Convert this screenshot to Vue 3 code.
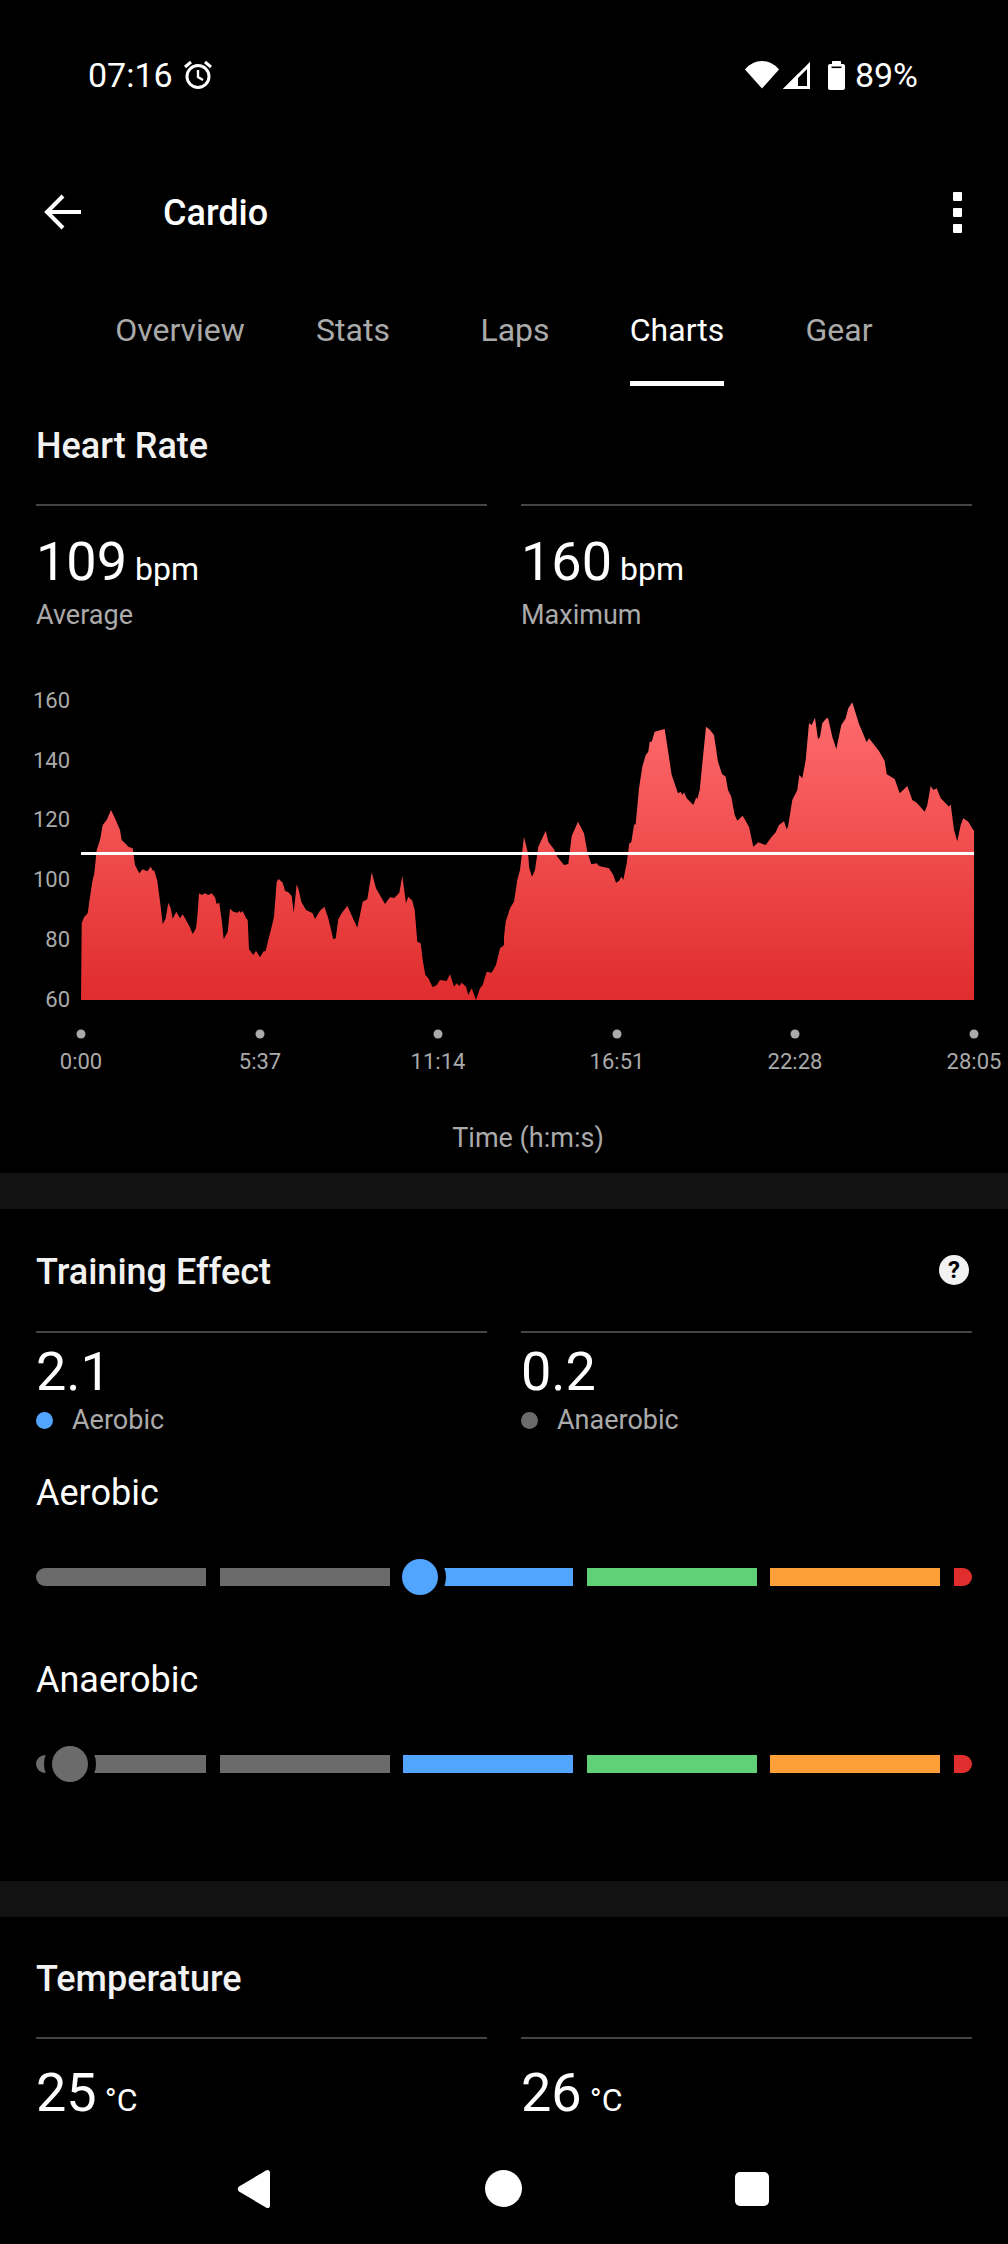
<script setup>
import { computed } from 'vue';

const tabs = ['Overview', 'Stats', 'Laps', 'Charts', 'Gear'];

// curve traced from the chart, in 3x crop coordinates
const leftCurve = [[245,730],[252,712],[263,700],[270,650],[277,605],[283,580],[290,510],[300,480],[308,435],[320,420],[333,390],[345,415],[360,450],[365,480],[378,492],[385,500],[398,505],[405,555],[418,580],[428,568],[442,574],[452,560],[458,572],[462,570],[472,602],[482,680],[488,733],[497,715],[505,668],[512,685],[518,716],[529,695],[540,715],[548,703],[558,720],[568,738],[578,762],[588,745],[592,710],[597,640],[605,645],[615,640],[625,645],[635,640],[645,652],[650,672],[658,668],[665,720],[671,778],[683,755],[690,686],[700,695],[712,698],[718,693],[722,698],[728,693],[738,714],[743,720],[747,808],[760,825],[768,812],[780,832],[790,815],[797,812],[805,780],[815,740],[822,710],[830,605],[836,597],[848,608],[855,632],[865,637],[875,648],[881,698],[890,613],[896,630],[904,665],[918,690],[938,700],[945,717],[960,692],[973,680],[985,715],[1000,778],[1007,775],[1015,718],[1025,700],[1042,677],[1050,695],[1072,743],[1088,665],[1102,658],[1115,577],[1128,625],[1155,672],[1170,652],[1183,654],[1198,638],[1207,588],[1218,670],[1225,650],[1237,662],[1244,690],[1252,785],[1262,790],[1268,840],[1276,885],[1285,895],[1298,922],[1310,915],[1320,900],[1340,903],[1350,882],[1362,920],[1370,910],[1378,918],[1385,908],[1398,920],[1405,945],[1415,925],[1428,960],[1440,925],[1448,915],[1460,875],[1475,878],[1488,855],[1500,805],[1512,795]];
const rightCurve = [[0,770],[5,725],[18,685],[30,665],[40,600],[48,570],[60,470],[72,520],[76,565],[84,590],[93,570],[103,500],[115,475],[125,452],[133,485],[140,495],[150,508],[160,530],[180,555],[193,552],[203,468],[222,425],[240,460],[250,515],[262,553],[278,550],[285,558],[315,565],[328,585],[336,608],[345,603],[352,590],[358,600],[368,550],[376,490],[382,487],[390,435],[395,432],[405,325],[415,260],[425,225],[433,215],[437,185],[443,185],[452,155],[482,147],[503,285],[522,340],[530,335],[535,345],[540,337],[548,355],[568,375],[577,352],[580,358],[587,330],[606,140],[612,145],[618,150],[630,165],[642,245],[654,282],[665,290],[672,330],[682,350],[692,405],[700,422],[716,407],[735,440],[748,500],[763,487],[785,495],[803,470],[815,457],[825,435],[840,424],[848,448],[852,440],[865,360],[880,330],[886,285],[895,295],[905,240],[915,130],[923,135],[933,113],[942,178],[948,170],[955,130],[965,117],[972,113],[985,170],[997,207],[1012,135],[1025,115],[1033,85],[1045,67],[1065,132],[1088,187],[1095,175],[1125,213],[1142,243],[1148,283],[1157,288],[1172,297],[1187,340],[1210,318],[1225,360],[1238,368],[1262,395],[1270,375],[1280,318],[1288,330],[1298,325],[1310,355],[1335,380],[1340,373],[1350,450],[1360,484],[1370,435],[1378,415],[1393,425],[1408,450],[1410,450]];

const chartPoints = computed(() => {
	const toPage = (x, y, offset) => `${(offset + x / 3).toFixed(1)},${(680 + y / 3).toFixed(1)}`;
	const left = leftCurve.map(([x, y]) => toPage(x, y, 0));
	const right = rightCurve.map(([x, y]) => toPage(x, y, 504));
	return ['81,1000', ...left, ...right, '974,1000'].join(' ');
});

const yLabels = [
	{ text: '160', y: 700 },
	{ text: '140', y: 760 },
	{ text: '120', y: 819 },
	{ text: '100', y: 879 },
	{ text: '80', y: 939 },
	{ text: '60', y: 999 },
];
const xLabels = [
	{ text: '0:00', x: 81 },
	{ text: '5:37', x: 260 },
	{ text: '11:14', x: 438 },
	{ text: '16:51', x: 617 },
	{ text: '22:28', x: 795 },
	{ text: '28:05', x: 974 },
];

const segments = [
	{ color: '#6b6b6b', width: 170 },
	{ color: '#6b6b6b', width: 170 },
	{ color: '#51a5ff', width: 170 },
	{ color: '#60d176', width: 170 },
	{ color: '#ff9f38', width: 170 },
	{ color: '#e02d2d', width: 18 },
];
const sliders = [
	{ name: 'Aerobic', knob: 384, color: '#51a5ff' },
	{ name: 'Anaerobic', knob: 34, color: '#6b6b6b' },
];
</script>

<template>
	<div class="screen">
		<div class="status">
			<div class="status__left">
				<span class="status__time">07:16</span>
				<svg class="status__alarm" width="30" height="30" viewBox="0 0 30 30" fill="none" stroke="#fff" stroke-width="3">
					<circle cx="15" cy="16.500" r="11" />
					<path d="M15 10v7l5 3" stroke-width="2.400" />
					<path d="M2 7 8 2M28 7 22 2" />
				</svg>
			</div>
			<div class="status__right">
				<svg width="34" height="28" viewBox="0 0 34 28" fill="#fff">
					<path d="M17 27.500 0 8.500C4.500 3 10.500 0 17 0s12.500 3 17 8.500Z" />
				</svg>
				<svg class="status__signal" width="27" height="27" viewBox="0 0 27 27">
					<path d="M25.500 3.500V25.500H3.500Z" fill="none" stroke="#fff" stroke-width="3" />
					<path d="M15 12V27H0Z" fill="#fff" />
				</svg>
				<svg class="status__battery" width="17" height="29" viewBox="0 0 17 29">
					<path d="M4 3V1c0-.6.400-1 1-1h7c.6 0 1 .4 1 1v2h2c1.100 0 2 .9 2 2v22c0 1.100-.9 2-2 2H2c-1.100 0-2-.9-2-2V5c0-1.100.9-2 2-2Z" fill="#fff" />
					<rect x="3.500" y="5.500" width="10" height="1.600" fill="#000" />
				</svg>
				<span class="status__pct">89%</span>
			</div>
		</div>

		<div class="toolbar">
			<svg class="toolbar__back" width="38" height="36" viewBox="0 0 38 36" fill="none" stroke="#fff" stroke-width="4">
				<path d="M37 18H4M19 2 3 18l16 16" />
			</svg>
			<span class="toolbar__title">Cardio</span>
			<div class="toolbar__menu">
				<i></i><i></i><i></i>
			</div>
		</div>

		<div class="tabs">
			<div
				v-for="tab in tabs"
				:key="tab"
				class="tabs__item"
				:class="{ 'tabs__item--active': tab === 'Charts' }"
			>
				<span class="tabs__label">{{ tab }}</span>
			</div>
		</div>

		<section class="section section--heart">
			<h2 class="section__title">Heart Rate</h2>
			<div class="stats">
				<div class="stat">
					<div class="stat__value">109<small>bpm</small></div>
					<div class="stat__label">Average</div>
				</div>
				<div class="stat">
					<div class="stat__value">160<small>bpm</small></div>
					<div class="stat__label">Maximum</div>
				</div>
			</div>
		</section>

		<svg class="chart" width="1008" height="533" viewBox="0 640 1008 533">
			<defs>
				<linearGradient id="hrFill" x1="0" y1="0" x2="0" y2="1">
					<stop offset="0" stop-color="#ff6c6e" />
					<stop offset="1" stop-color="#e02c2c" />
				</linearGradient>
			</defs>
			<polygon :points="chartPoints" fill="url(#hrFill)" />
			<rect x="81" y="852" width="893" height="3" fill="#fff" />
			<text
				v-for="label in yLabels"
				:key="label.text"
				class="chart__text"
				x="70"
				:y="label.y + 8"
				text-anchor="end"
			>{{ label.text }}</text>
			<template v-for="label in xLabels" :key="label.text">
				<circle :cx="label.x" cy="1034" r="4.500" fill="#aaa" />
				<text class="chart__text" :x="label.x" y="1069" text-anchor="middle">{{ label.text }}</text>
			</template>
			<text class="chart__axis" x="528" y="1147" text-anchor="middle">Time (h:m:s)</text>
		</svg>

		<div class="band"></div>

		<section class="section section--training">
			<div class="section__head">
				<h2 class="section__title">Training Effect</h2>
				<div class="help">?</div>
			</div>
			<div class="stats stats--training">
				<div class="stat">
					<div class="stat__value">2.1</div>
					<div class="stat__legend"><i class="dot dot--blue"></i>Aerobic</div>
				</div>
				<div class="stat">
					<div class="stat__value">0.2</div>
					<div class="stat__legend"><i class="dot dot--gray"></i>Anaerobic</div>
				</div>
			</div>
			<div v-for="slider in sliders" :key="slider.name" class="effect">
				<div class="effect__name">{{ slider.name }}</div>
				<div class="effect__bar">
					<div
						v-for="(seg, i) in segments"
						:key="i"
						class="effect__seg"
						:style="{ background: seg.color, width: seg.width + 'px' }"
					></div>
					<div class="effect__knob" :style="{ left: slider.knob - 18 + 'px', background: slider.color }"></div>
				</div>
			</div>
		</section>

		<div class="band"></div>

		<section class="section section--temp">
			<h2 class="section__title">Temperature</h2>
			<div class="stats stats--temp">
				<div class="stat">
					<div class="stat__value">25<small>°C</small></div>
				</div>
				<div class="stat">
					<div class="stat__value">26<small>°C</small></div>
				</div>
			</div>
		</section>

		<div class="nav">
			<svg width="34" height="40" viewBox="0 0 34 40" fill="#fff">
				<path d="M29 1.500c1.800-1.300 4-.3 4 2v33c0 2.300-2.200 3.300-4 2L2 22.500c-1.600-1.200-1.600-3.800 0-5Z" />
			</svg>
			<div class="nav__home"></div>
			<div class="nav__recent"></div>
		</div>
	</div>
</template>

<style>
html,
body {
	background: #000;
}
</style>

<style scoped>
.screen {
	position: relative;
	width: 1008px;
	height: 2244px;
	overflow: hidden;
	background: #000;
	color: #fff;
	font-family: Roboto, sans-serif;
}

.status {
	height: 150px;
	padding: 58px 90px 0 88px;
	box-sizing: border-box;
	display: flex;
	justify-content: space-between;
	align-items: flex-start;
}

.status__left,
.status__right {
	display: flex;
	align-items: center;
	height: 34px;
}

.status__time,
.status__pct {
	font-size: 34px;
	line-height: 34px;
}

.status__alarm {
	margin-left: 10px;
}

.status__signal {
	margin-left: 4px;
}

.status__battery {
	margin-left: 18px;
}

.status__pct {
	margin-left: 10px;
}

.toolbar {
	height: 124px;
	display: flex;
	align-items: center;
	padding: 0 46px 0 44px;
}

.toolbar__back {
	flex: none;
}

.toolbar__title {
	margin-left: 81px;
	margin-top: 2px;
	font-size: 36px;
	font-weight: 500;
}

.toolbar__menu {
	margin-left: auto;
	display: flex;
	flex-direction: column;
	gap: 7px;
}

.toolbar__menu i {
	display: block;
	width: 9px;
	height: 9px;
	background: #fff;
	border-radius: 1px;
}

.tabs {
	height: 112px;
	padding-left: 88px;
	display: flex;
}

.tabs__item {
	width: 162px;
	display: flex;
	justify-content: center;
}

.tabs__item:first-child {
	width: 184px;
}

.tabs__label {
	height: 107px;
	padding-top: 36px;
	box-sizing: border-box;
	line-height: 40px;
	font-size: 32px;
	color: #aaa;
}

.tabs__item--active .tabs__label {
	height: 112px;
	color: #fff;
	border-bottom: 5px solid #fff;
}

.section {
	padding: 0 36px;
}

.section__title {
	margin: 0;
	font-size: 36px;
	line-height: 40px;
	font-weight: 500;
	color: #f2f2f2;
}

.section--heart {
	padding-top: 40px;
}

.section--training {
	padding-top: 43px;
	padding-bottom: 108px;
}

.section--temp {
	padding-top: 42px;
}

.section__head {
	display: flex;
	justify-content: space-between;
	align-items: center;
}

.help {
	width: 30px;
	height: 30px;
	margin-right: 3px;
	margin-bottom: 4px;
	border-radius: 50%;
	background: #f2f2f2;
	color: #000;
	font-size: 24px;
	font-weight: 700;
	line-height: 30px;
	text-align: center;
}

.stats {
	margin-top: 38px;
	display: grid;
	grid-template-columns: 1fr 1fr;
	gap: 34px;
}

.stats--training {
	margin-top: 39px;
}

.stat {
	border-top: 2px solid #444;
	padding-top: 24px;
}

.stats--training .stat {
	padding-top: 7px;
}

.stats--temp .stat {
	padding-top: 22px;
}

.stat__value {
	font-size: 54px;
	line-height: 64px;
}

.stat__value small {
	margin-left: 8px;
	font-size: 32px;
	line-height: 0;
}

.stat__label {
	margin-top: 3px;
	font-size: 27px;
	line-height: 36px;
	color: #aaa;
}

.stat__legend {
	display: flex;
	align-items: center;
	font-size: 27px;
	line-height: 32px;
	color: #aaa;
}

.dot {
	width: 17px;
	height: 17px;
	border-radius: 50%;
	margin-right: 19px;
}

.dot--blue {
	background: #51a5ff;
}

.dot--gray {
	background: #6b6b6b;
}

.chart {
	display: block;
	margin-top: 7px;
}

.chart__text {
	font-size: 22px;
	fill: #aaa;
}

.chart__axis {
	font-size: 27px;
	fill: #aaa;
}

.band {
	height: 36px;
	background: #121212;
}

.effect__name {
	margin-top: 37px;
	font-size: 36px;
	line-height: 40px;
}

.effect + .effect .effect__name {
	margin-top: 74px;
}

.effect__bar {
	position: relative;
	margin-top: 55px;
	display: flex;
	justify-content: space-between;
	height: 18px;
}

.effect__seg {
	height: 18px;
}

.effect__seg:first-child {
	border-radius: 9px 0 0 9px;
}

.effect__seg:nth-last-child(2) {
	border-radius: 0 9px 9px 0;
}

.effect__knob {
	position: absolute;
	top: -9px;
	width: 36px;
	height: 36px;
	border-radius: 50%;
	box-shadow: 0 0 0 8px #000;
}

.nav {
	position: absolute;
	left: 0;
	right: 0;
	bottom: 0;
	height: 108px;
	background: #000;
}

.nav svg {
	position: absolute;
	left: 237px;
	top: 33px;
}

.nav__home {
	position: absolute;
	left: 485px;
	top: 34px;
	width: 37px;
	height: 37px;
	border-radius: 50%;
	background: #fff;
}

.nav__recent {
	position: absolute;
	left: 735px;
	top: 36px;
	width: 34px;
	height: 34px;
	border-radius: 5px;
	background: #fff;
}
</style>
